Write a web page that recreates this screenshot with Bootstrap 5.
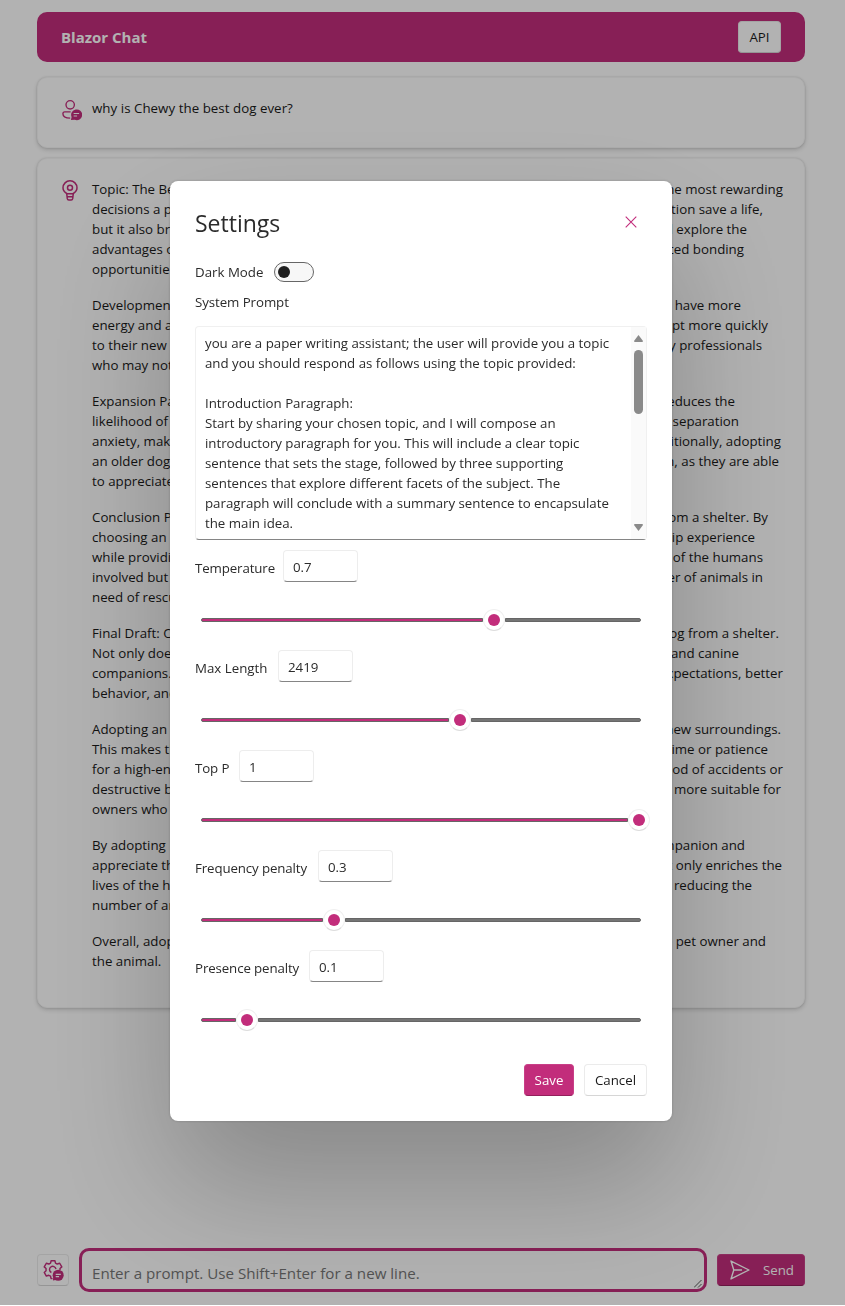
<!DOCTYPE html>
<html lang="en">
<head>
<meta charset="utf-8">
<meta name="viewport" content="width=device-width, initial-scale=1">
<title>Blazor Chat</title>
<link href="https://cdn.jsdelivr.net/npm/bootstrap@5.3.0/dist/css/bootstrap.min.css" rel="stylesheet">
<style>
:root{--accent:#c22d7b}
body{font-family:"Open Sans","Noto Sans",sans-serif;font-size:13.3px;line-height:20px;color:#1a1a1a;background:#fff;overflow:hidden}
.page{height:1306px;padding:12px 40px 14px 37px}
.topbar{height:50px;background:var(--accent);border-radius:10px;padding:0 24px}
.brand{font-size:15px;font-weight:700;color:#fff}
.fl-btn{height:32px;border:1px solid #ebebeb;border-bottom-color:#d6d6d6;border-radius:4px;background:#fff;color:#1a1a1a;font-size:inherit;line-height:20px;padding:0 10px;display:inline-flex;align-items:center;justify-content:center}
.fl-accent{background:var(--accent);border-color:#c93f87;border-bottom-color:#93205c;color:#fff;font-weight:500}
.bubble{border-radius:10px;border:1px solid #f7f7f7;background:#fff;box-shadow:0 0 2px rgba(0,0,0,.14),0 2px 4px rgba(0,0,0,.16);padding:20px 21px 0 24px}
.ico{width:30px;flex:none;color:var(--accent)}
.para{margin-bottom:16px}
.tline{display:flex;justify-content:space-between;height:20px;white-space:nowrap}
.prompt{width:628px;height:44px;border:3px solid var(--accent);border-radius:10px;font-size:15.15px;color:#767676;padding:11px 10px 0;line-height:22px}
.shade{background:rgba(0,0,0,.3);height:1305px;overflow:hidden}
.shade .modal-dialog{width:502px;max-width:none;margin:181px 0 0 170px}
.shade .modal-content{height:940px;border:0;border-radius:8px;padding:24px 25px;box-shadow:0 0 3px rgba(0,0,0,.2),0 64px 128px rgba(0,0,0,.24);color:#2b2b2b}
.shade h5{font-size:23px;line-height:32px;font-weight:400;margin:2px 0 1px}
.switch{width:40px;height:20px;border:1px solid #666;border-radius:10px;background:#f7f7f7;padding:3px}
.switch i{display:block;width:12px;height:12px;border-radius:50%;background:#1f1f1f}
.area{height:214px;width:452px;border:1px solid #f0f0f0;border-bottom-color:#858585;border-radius:4px;padding-left:9px}
.area-text{white-space:pre;padding-top:6px;height:212px;overflow:hidden;letter-spacing:-.02px}
.bar{width:15px;background:#fafafa;padding:8px 0 8px}
.thumbbar{width:9px;height:64px;border-radius:5px;background:#8a8a8a;margin-top:8px}
.setting{height:100px}
.num{width:75px;height:32px;border:1px solid #ededed;border-bottom-color:#858585;border-radius:4px;padding:6px 9px 4px}
.slider{width:440px;height:22px;margin:27px 0 0 6px}
.rail{height:4px;background:#757575;border:1px solid #666}
.fill{background:var(--accent);border-radius:2px 0 0 2px;flex:none}
.rest{border-radius:0 2px 2px 0}
.knob{width:22px;height:22px;flex:none;border-radius:50%;border:1px solid #f0f0f0;border-bottom-color:#ddd;padding:4px;background:#fff}
.knob i{display:block;width:12px;height:12px;border-radius:50%;background:var(--accent)}
.fit{letter-spacing:-.12px}
svg{display:block}
</style>
</head>
<body>
<div class="page d-flex flex-column">
  <header class="topbar d-flex align-items-center justify-content-between">
    <span class="brand">Blazor Chat</span>
    <button class="fl-btn" style="width:43px">API</button>
  </header>
  <section class="bubble d-flex" style="height:71px;margin-top:15px">
    <div class="ico"><svg style="margin-top:1px" width="20" height="22" viewBox="0 0 22 24" fill="none" stroke="currentColor" stroke-width="1.5"><circle cx="9" cy="6.300" r="4.600"/><path d="M9.500 14H3a2 2 0 0 0-2 2c0 2.900 3 4.800 8 5"/><path d="M15 11.500a5.900 5.900 0 1 1-1 11.200l-4.200.4.800-3.300a5.900 5.900 0 0 1 4.400-8.300z" fill="currentColor" stroke="none"/><path d="M12.800 15.800h6M12.800 18.600h3.800" stroke="#fff" stroke-width="1.200"/></svg></div>
    <div style="letter-spacing:.04px">why is Chewy the best dog ever?</div>
  </section>
  <section class="bubble d-flex" style="height:850px;margin-top:10px">
    <div class="ico"><svg style="margin-top:1px" width="16" height="22" viewBox="0 0 16 22" fill="none" stroke="currentColor" stroke-width="1.5"><path d="M4.700 13.500C2.400 12.200 1 10.200 1 7.800a7 7 0 0 1 14 0c0 2.400-1.400 4.400-3.700 5.700l-.6 5.200q-.2 1.300-1.500 1.300H6.800q-1.300 0-1.500-1.300z"/><path d="M4.800 13.700h6.400M5 16.800h6"/><circle cx="8" cy="7.700" r="2.500"/></svg></div>
    <div class="flex-grow-1" id="reply"></div>
  </section>
  <footer class="d-flex align-items-center mt-auto">
    <button class="fl-btn p-0" style="width:32px;color:var(--accent)"><svg style="margin:1px 0 0 1px" width="21" height="21" viewBox="0 0 22 22" fill="none" stroke="currentColor" stroke-width="1.500" stroke-linejoin="round"><path d="M10 19.500H8.500L7.900 17l-1.800-1-2.600.8L1.300 13l1.900-1.800V9L1.300 7.200l2.200-3.800 2.600.8 1.800-1L8.500.8h4l.6 2.400 1.800 1 2.600-.8 2.200 3.800L17.800 9v1.500"/><path d="M13.600 9.500a3.400 3.400 0 1 0-4.800 3.600"/><circle cx="15.900" cy="16" r="5.800" fill="currentColor" stroke="none"/><path d="M11 16l-.6 5.600 4-1z" fill="currentColor" stroke="none"/><path d="M13.300 15h5.400M13.300 17.400h3.500" stroke="#fff" stroke-width="1.200"/></svg></button>
    <div class="prompt d-flex justify-content-between" style="margin-left:10px"><span>Enter a prompt. Use Shift+Enter for a new line.</span>
      <svg class="align-self-end" style="margin:0 -8px 1px 0" width="8" height="8" viewBox="0 0 8 8" stroke="#555" stroke-width="1"><path d="M0 7.500L7.500 0M4 7.500L7.500 4"/></svg></div>
    <button class="fl-btn fl-accent" style="width:88px;margin-left:10px;justify-content:flex-start;padding-left:12px"><svg width="20" height="20" viewBox="0 0 20 20" fill="none" stroke="currentColor" stroke-width="1.400" stroke-linejoin="round"><path d="M1 1l18 9L1 19l2.800-9zM3.800 10H12"/></svg><span style="margin-left:13px">Send</span></button>
  </footer>
</div>

<div class="modal d-block shade" tabindex="-1">
  <div class="modal-dialog">
    <div class="modal-content">
      <div class="d-flex justify-content-between">
        <h5>Settings</h5>
        <svg style="margin:11px 10px 0 0" width="12" height="12" viewBox="0 0 12 12" stroke="#c22d7b" stroke-width="1.100"><path d="M.7.700l10.600 10.600M11.300.700L.7 11.300"/></svg>
      </div>
      <div class="d-flex align-items-center" style="margin-top:22px;height:20px"><span style="width:79px">Dark Mode</span><span class="switch"><i></i></span></div>
      <div style="margin:10px 0 14px"><span style="letter-spacing:-.08px">System Prompt</span></div>
      <div class="area d-flex justify-content-between">
        <div class="area-text">you are a paper writing assistant; the user will provide you a topic
and you should respond as follows using the topic provided:

Introduction Paragraph:
Start by sharing your chosen topic, and I will compose an
introductory paragraph for you. This will include a clear topic
sentence that sets the stage, followed by three supporting
sentences that explore different facets of the subject. The
paragraph will conclude with a summary sentence to encapsulate
the main idea.</div>
        <div class="bar d-flex flex-column align-items-center">
          <svg width="9" height="7" viewBox="0 0 9 7" fill="#8a8a8a"><path d="M4.500 0L9 6Q9 7 8 7H1Q0 7 0 6z"/></svg>
          <div class="thumbbar"></div>
          <svg class="mt-auto" width="9" height="7" viewBox="0 0 9 7" fill="#8a8a8a"><path d="M4.500 7L9 1Q9 0 8 0H1Q0 0 0 1z"/></svg>
        </div>
      </div>
      <div id="settings" style="margin-top:10px"></div>
      <div class="d-flex justify-content-end" style="margin-top:14px">
        <button class="fl-btn fl-accent" style="width:50px">Save</button>
        <button class="fl-btn" style="width:63px;margin:0 0 0 10px">Cancel</button>
      </div>
    </div>
  </div>
</div>

<script src="https://cdn.jsdelivr.net/npm/bootstrap@5.3.0/dist/js/bootstrap.bundle.min.js"></script>
<script>
// Each line: opening words, closing words, and the inset of the ragged right edge.
const reply = [
 [["Topic: The Best","the most rewarding",0],["decisions a person","adoption save a life,",20],["but it also brings","and explore the",36],["advantages of","enhanced bonding",39],["opportunities"]],
 [["Development:","have more",42],["energy and a","adapt more quickly",15],["to their new","busy professionals",21],["who may not"]],
 [["Expansion Par","reduces the",48],["likelihood of","separation",44],["anxiety, making","Additionally, adopting",2],["an older dog","calm, as they are able",4],["to appreciate"]],
 [["Conclusion Par","from a shelter. By",15],["choosing an","ownership experience",28],["while providing","of the humans",20],["involved but","number of animals in",20],["need of rescue"]],
 [["Final Draft: One","dog from a shelter.",4],["Not only does","and canine",44],["companions.","expectations, better",0],["behavior, and"]],
 [["Adopting an","new surroundings.",2],["This makes them","time or patience",15],["for a high-energy","likelihood of accidents or",0],["destructive beh","more suitable for",2],["owners who"]],
 [["By adopting","companion and",38],["appreciate the","not only enriches the",1],["lives of the hum","reducing the",31],["number of animals"]],
 [["Overall, adopting","the pet owner and",17],["the animal."]]
];
document.getElementById("reply").innerHTML = reply.map(p => '<div class="para">' + p.map(([a,b,r]) =>
 `<div class="tline"><span>${a}</span>${b ? `<span style="margin-right:${r}px">${b}</span>` : ""}</div>`).join("") + "</div>").join("");
// Label, value, label column width, filled rail length.
const settings = [["Temperature","0.7",88,282],["Max Length","2419",83,248],["Top P","1",44,427],["Frequency penalty","0.3",123,122],["Presence penalty","0.1",114,35]];
document.getElementById("settings").innerHTML = settings.map(([l,v,w,f]) =>
 `<div class="setting"><div class="d-flex"><span style="width:${w}px;padding-top:8px" class="text-nowrap ${/^[TFP]/.test(l) ? "fit" : ""}">${l}</span><span class="num">${v}</span></div>
 <div class="slider d-flex align-items-center"><div class="rail fill" style="width:${f}px"></div><div class="knob"><i></i></div>${f < 420 ? '<div class="rail rest flex-grow-1"></div>' : ""}</div></div>`).join("");
</script>
</body>
</html>
